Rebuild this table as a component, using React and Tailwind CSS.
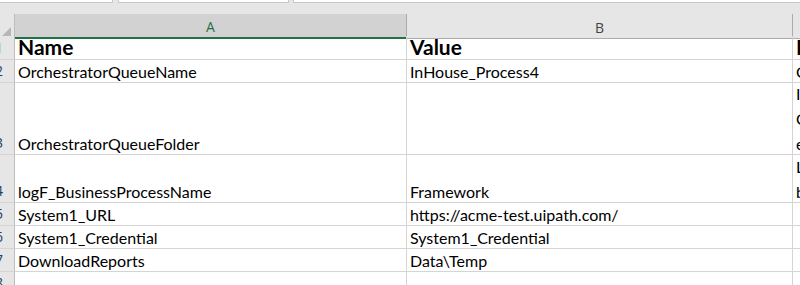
import React from "react";

const font = { fontFamily: "Lato, 'Open Sans', sans-serif" };
const headFont = { fontFamily: "'Open Sans', sans-serif" };

const rows = [
  { n: "1", h: "h-[24px]", a: "Name", b: "Value", c: ["Description"], bold: true },
  { n: "2", h: "h-[23px]", a: "OrchestratorQueueName", b: "InHouse_Process4", c: ["Orchestrator queue name"] },
  { n: "3", h: "h-[72px]", a: "OrchestratorQueueFolder", b: "", c: ["If the queue lives in a folder,", "Orchestrator folder name,", "else leave it empty"] },
  { n: "4", h: "h-[48px]", a: "logF_BusinessProcessName", b: "Framework", c: ["Logging field for the", "business process name"] },
  { n: "5", h: "h-[23px]", a: "System1_URL", b: "https://acme-test.uipath.com/", c: [""] },
  { n: "6", h: "h-[23px]", a: "System1_Credential", b: "System1_Credential", c: [""] },
  { n: "7", h: "h-[23px]", a: "DownloadReports", b: "Data\\Temp", c: [""] },
  { n: "8", h: "h-[23px]", a: "", b: "", c: [""] },
];

function Cell({ children, bold, extra = "" }) {
  return (
    <div
      className={`flex flex-col justify-end overflow-hidden whitespace-nowrap border-b border-r border-[#d4d4d4] pl-[3px] text-black ${
        bold ? "pb-0 text-[21px] font-bold leading-[24px]" : "gap-[5px] pb-0 text-[16px] leading-[20px]"
      } ${extra}`}
    >
      {children}
    </div>
  );
}

export default function App() {
  return (
    <div className="h-[285px] w-[800px] overflow-hidden bg-white" style={font}>
      {/* ribbon remnants above the sheet */}
      <div className="flex h-[14px] bg-[#e6e6e6]">
        <div className="h-[3px] w-[113px] border-b border-r border-[#c8c8c8] bg-white" />
        <div className="ml-[5px] h-[3px] w-[171px] border-b border-l border-r border-[#c8c8c8] bg-white" />
        <div className="ml-[4px] h-[3px] flex-1 border-b border-l border-[#c8c8c8] bg-white" />
      </div>

      {/* column headers */}
      <div className="grid h-[22px] grid-cols-[15px_392px_386px_1fr]">
        <div className="relative border-r border-[#bdbdbd] bg-[#e6e6e6]">
          <div className="absolute bottom-[3px] right-[3px] h-0 w-0 border-b-[9px] border-l-[9px] border-b-[#b7b7b7] border-l-transparent" />
        </div>
        <div
          className="flex items-center justify-center border-b-2 border-r border-b-[#217346] border-r-[#ababab] bg-[#d2d2d2] pt-[2px] text-[14px] text-[#217346]"
          style={headFont}
        >
          A
        </div>
        <div
          className="flex items-center justify-center border-b border-r border-b-[#ababab] border-r-[#ababab] bg-[#e6e6e6] pt-[2px] text-[14px] text-[#444]"
          style={headFont}
        >
          B
        </div>
        <div className="border-b border-b-[#ababab] bg-[#e6e6e6]" />
      </div>

      {/* sheet rows */}
      {rows.map((r) => (
        <div key={r.n} className={`grid grid-cols-[15px_392px_386px_1fr] ${r.h}`}>
          <div
            className="flex items-end justify-start overflow-hidden border-b border-r border-b-[#d4d4d4] border-r-[#bdbdbd] bg-[#e6e6e6] pb-[1px] text-[14px] leading-[20px] text-[#1f3f66]"
            style={headFont}
          >
            <span className="-ml-[5px]">{r.n}</span>
          </div>
          <Cell bold={r.bold}>{r.a}</Cell>
          <Cell bold={r.bold}>{r.b}</Cell>
          <Cell bold={r.bold} extra="border-r-0">
            {r.c.map((line, i) => (
              <span key={i}>{line}</span>
            ))}
          </Cell>
        </div>
      ))}
    </div>
  );
}
